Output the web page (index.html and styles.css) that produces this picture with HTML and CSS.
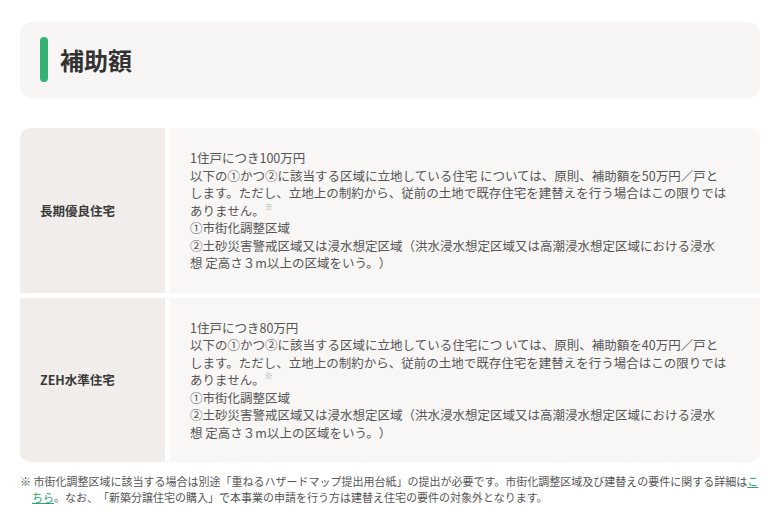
FILE: index.html
```html
<!DOCTYPE html>
<html lang="ja">
<head>
  <meta charset="UTF-8" />
  <meta name="viewport" content="width=device-width, initial-scale=1.0"/>
  <title>補助額</title>
  <link rel="stylesheet" href="styles.css">
</head>
<body>
  <main class="page">

    <!-- Heading -->
    <div class="heading-card">
      <span class="heading-bar"></span>
      <h2 class="heading-title">補助額</h2>
    </div>

    <!-- Amount table -->
    <div class="amount-table">
      <div class="amount-label label-first">長期優良住宅</div>
      <div class="amount-body body-first">
        1住戸につき100万円<br>
        以下の①かつ②に該当する区域に立地している住宅 については、原則、補助額を50万円／戸と<br>
        します。ただし、立地上の制約から、従前の土地で既存住宅を建替えを行う場合はこの限りでは<br>
        ありません。<sup class="note-mark">※</sup><br>
        ①市街化調整区域<br>
        ②土砂災害警戒区域又は浸水想定区域（洪水浸水想定区域又は高潮浸水想定区域における浸水<br>
        想 定高さ３m以上の区域をいう。）
      </div>

      <div class="amount-label label-last">ZEH水準住宅</div>
      <div class="amount-body body-last">
        1住戸につき80万円<br>
        以下の①かつ②に該当する区域に立地している住宅につ いては、原則、補助額を40万円／戸と<br>
        します。ただし、立地上の制約から、従前の土地で既存住宅を建替えを行う場合はこの限りでは<br>
        ありません。<sup class="note-mark">※</sup><br>
        ①市街化調整区域<br>
        ②土砂災害警戒区域又は浸水想定区域（洪水浸水想定区域又は高潮浸水想定区域における浸水<br>
        想 定高さ３m以上の区域をいう。）
      </div>
    </div>

    <p class="footnote">※ 市街化調整区域に該当する場合は別途「重ねるハザードマップ提出用台紙」の提出が必要です。市街化調整区域及び建替えの要件に関する詳細は<a href="#" class="footnote-link">こちら</a>。なお、「新築分譲住宅の購入」で本事業の申請を行う方は建替え住宅の要件の対象外となります。</p>

  </main>
</body>
</html>
```

FILE: styles.css
```css
body {
  margin: 0;
  background: #fff;
  font-family: "Noto Sans CJK JP", "Noto Sans", sans-serif;
  color: #555;
  text-spacing-trim: space-all;
}
.page {
  padding: 22px 21px 20px 20px;
}

/* heading */
.heading-card {
  display: flex;
  align-items: center;
  gap: 12px;
  padding: 15px 20px 16px;
  background: #f8f6f4;
  border-radius: 12px;
}
.heading-bar {
  width: 8px;
  height: 45px;
  background: #33b073;
  border-radius: 4px;
}
.heading-title {
  margin: 0;
  font-size: 24px;
  font-weight: 700;
  color: #333;
}

/* table */
.amount-table {
  display: grid;
  grid-template-columns: 145px 1fr;
  gap: 5px;
  margin-top: 30px;
}
.amount-label {
  display: flex;
  align-items: center;
  padding: 0 20px;
  background: #f0edea;
  font-size: 12.5px;
  font-weight: 700;
  color: #3a3a3a;
}
.amount-body {
  padding: 21px 10px 21px 20px;
  background: #f8f7f5;
  font-size: 12.5px;
  line-height: 17.5px;
  color: #555;
}
.label-first { border-top-left-radius: 10px; }
.body-first { border-top-right-radius: 10px; }
.label-last { border-bottom-left-radius: 10px; }
.body-last { border-bottom-right-radius: 10px; }

.note-mark {
  font-size: 8px;
  line-height: 0;
  color: #999;
  vertical-align: 6px;
}

/* footnote */
.footnote {
  margin: 12px 0 0;
  padding-left: 12px;
  text-indent: -12px;
  font-size: 11px;
  line-height: 15.5px;
  color: #555;
}
.footnote-link {
  color: #2ba56c;
  text-decoration: underline;
}
```
